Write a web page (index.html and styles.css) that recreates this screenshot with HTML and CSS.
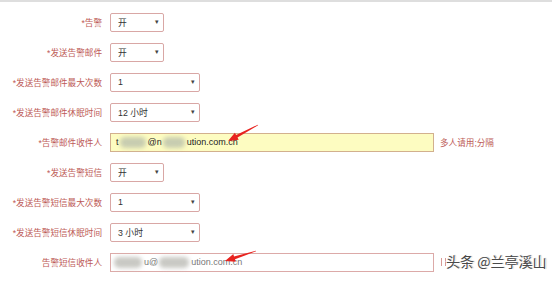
FILE: index.html
```html
<!DOCTYPE html>
<html lang="zh">
<head>
    <meta charset="UTF-8">
    <meta name="viewport" content="width=device-width, initial-scale=1.0">
    <title>告警设置</title>
    <link rel="stylesheet" href="styles.css">
</head>
<body>
    <div class="page">
        <div class="topline"></div>

        <div class="form">
            <div class="row">
                <label class="label">*告警</label>
                <div class="select small"><span>开</span><i>▾</i></div>
            </div>
            <div class="row">
                <label class="label">*发送告警邮件</label>
                <div class="select small"><span>开</span><i>▾</i></div>
            </div>
            <div class="row">
                <label class="label">*发送告警邮件最大次数</label>
                <div class="select medium"><span>1</span><i>▾</i></div>
            </div>
            <div class="row">
                <label class="label">*发送告警邮件休眠时间</label>
                <div class="select medium"><span>12 小时</span><i>▾</i></div>
            </div>
            <div class="row">
                <label class="label">*告警邮件收件人</label>
                <div class="input filled">t<b class="blur w1"></b>@n<b class="blur w2"></b>ution.com.cn</div>
                <span class="hint">多人请用;分隔</span>
            </div>
            <div class="row">
                <label class="label">*发送告警短信</label>
                <div class="select small"><span>开</span><i>▾</i></div>
            </div>
            <div class="row">
                <label class="label">*发送告警短信最大次数</label>
                <div class="select medium"><span>1</span><i>▾</i></div>
            </div>
            <div class="row">
                <label class="label">*发送告警短信休眠时间</label>
                <div class="select medium"><span>3 小时</span><i>▾</i></div>
            </div>
            <div class="row">
                <label class="label">告警短信收件人</label>
                <div class="input faded"><b class="blur w3"></b>u@<b class="blur w4"></b>ution.com.cn</div>
                <span class="hint-cut"></span>
            </div>
        </div>

        <!-- 标注箭头 -->
        <svg class="arrow arrow-1" width="34" height="20" viewBox="0 0 34 20">
            <polygon points="2,18 12.7,16.8 11.5,14.6 32.1,2.3 31.9,1.7 10.1,12 8.9,9.8" fill="#e8231f"/>
        </svg>
        <svg class="arrow arrow-2" width="35" height="14" viewBox="0 0 35 14">
            <polygon points="2,12 12.7,12.7 12,10.3 33.1,2.3 32.9,1.7 11,7.5 10.3,5.1" fill="#e8231f"/>
        </svg>

        <div class="watermark">头条 @兰亭溪山</div>
    </div>
</body>
</html>
```

FILE: styles.css
```css
body {
    margin: 0;
    background: #fff;
    font-family: "Liberation Sans", "Noto Sans CJK SC", sans-serif;
}

.page {
    position: relative;
    width: 554px;
    height: 281px;
    overflow: hidden;
}

.topline {
    height: 2px;
    margin-right: 2px;
    background: #dedede;
}

.form {
    padding-top: 5px;
}

.row {
    display: flex;
    align-items: center;
    height: 30px;
}

.label {
    width: 102px;
    padding-right: 8px;
    text-align: right;
    font-size: 8.6px;
    color: #bd5a56;
    white-space: nowrap;
}

/* 下拉框 */
.select {
    box-sizing: border-box;
    height: 19px;
    border: 1px solid #d9a7a5;
    border-radius: 2px;
    display: flex;
    align-items: center;
    justify-content: space-between;
    padding: 0 4px 0 7px;
    font-size: 8.8px;
    color: #333;
}

.select i {
    font-style: normal;
    font-size: 7px;
    color: #444;
}

.small {
    width: 54px;
}

.medium {
    width: 90px;
}

/* 输入框 */
.input {
    box-sizing: border-box;
    width: 324px;
    height: 19px;
    display: flex;
    align-items: center;
    padding: 0 5px;
    font-size: 9px;
}

.filled {
    background: #fdfcc1;
    border: 1px solid #d2b08e;
    color: #222;
}

.faded {
    background: #fff;
    border: 1px solid #dcaaa8;
    color: #777;
}

.blur {
    display: inline-block;
    height: 11px;
    background: #c9c9c4;
    border-radius: 5px;
    filter: blur(2px);
}

.filled .blur {
    background: #c8cdb0;
}

.w1 { width: 26px; margin: 0 2px 0 1px; }
.w2 { width: 22px; margin: 0 2px 0 1px; }
.w3 { width: 28px; margin: 0 2px 0 -2px; }
.w4 { width: 30px; margin: 0 2px 0 1px; }

.hint {
    margin-left: 6px;
    font-size: 8.6px;
    color: #bd5a56;
}

/* 被水印挡住的提示文字残留 */
.hint-cut {
    width: 3px;
    height: 8px;
    margin-left: 7px;
    border-left: 1px solid #d89a96;
    border-right: 1px solid #d89a96;
}

.arrow {
    position: absolute;
}

.arrow-1 {
    left: 226px;
    top: 123px;
}

.arrow-2 {
    left: 223px;
    top: 249px;
}

/* 水印 */
.watermark {
    position: absolute;
    left: 446px;
    top: 252px;
    font-family: "Noto Sans CJK SC", sans-serif;
    font-size: 14px;
    line-height: 19px;
    color: #4a4a4a;
    text-shadow: 1px 1px 0 #fff, -1px -1px 0 #fff, 1px 0 1px #999;
    white-space: nowrap;
}
```
